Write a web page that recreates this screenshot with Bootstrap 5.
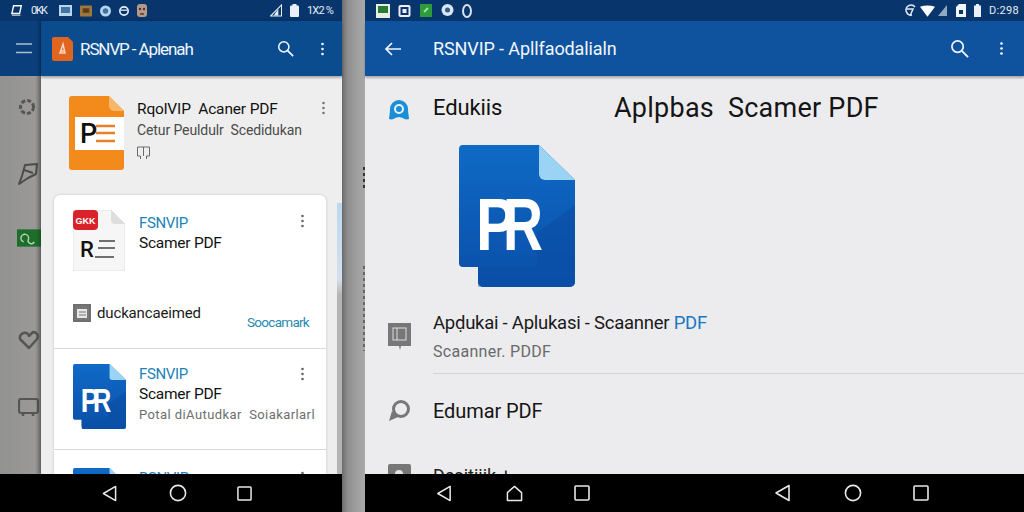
<!DOCTYPE html>
<html lang="id">
<head>
<meta charset="utf-8">
<title>RSNVIP</title>
<link href="https://cdn.jsdelivr.net/npm/bootstrap@5.3.0/dist/css/bootstrap.min.css" rel="stylesheet">
<style>
html,body{width:1024px;height:512px;overflow:hidden;margin:0}
body{font-family:Roboto,"Liberation Sans",sans-serif;color:#111;background:#a2a2a2}
svg{display:block;flex:none}
.phone-a{width:342px;height:512px}
.gap-strip{width:23px;height:512px;background:linear-gradient(90deg,#6c6c6c 0,#8f8f8f 25%,#a0a0a0 70%,#a8a8a8 100%)}
.gap-dots{width:2px;margin-left:21px;background-image:repeating-linear-gradient(180deg,#333 0 3px,transparent 3px 6px)}
.gap-dots-a{height:24px;margin-top:167px}
.gap-dots-b{height:85px;margin-top:75px;opacity:.55}
.phone-b{width:659px;height:512px}
.stat{height:21px;background:#07356c;color:#e6edf5;font-size:11px;flex:none}
.stat-a{padding:0 9px 0 11px}
.stat-b{padding:0 5px 0 11px}
.stat-txt{font-size:11px;line-height:21px}
.stat-a .stat-txt{letter-spacing:-.8px}
.stat-a .stat-k{letter-spacing:-1.5px}
.stat-b .stat-txt{letter-spacing:.3px}
.tight{margin-left:2px}
.body-a{height:453px}
.rail{width:41px}
.rail-top{height:55px;background:#0a3f7c;padding-left:16px}
.rail-low{height:398px;background:linear-gradient(90deg,#929290,#9a9997 85%,#7e7e7e);padding:22px 0 0 18px}
.rail-low svg:nth-child(1){margin-bottom:46px}
.rail-low svg:nth-child(2){margin:0 0 43px -1px}
.rail-low svg:nth-child(3){margin:0 0 83px -1px}
.rail-low svg:nth-child(4){margin-bottom:48px}
.drawer{width:301px;box-shadow:-2px 0 3px rgba(0,0,0,.25);z-index:1}
.bar{height:55px;background:#0c4f96;color:#f2f6fb;box-shadow:0 2px 2px rgba(0,0,0,.28);z-index:1;flex:none}
.bar-a{padding:0 17px 0 11px;background:#0b4c8f}
.bar-b{padding:0 20px 0 19px;background:#0f539f}
.bar-title{line-height:22px}
.bar-a .bar-title{margin-left:7px;font-size:17px;letter-spacing:-1.1px}
.bar-b .bar-title{margin-left:32px;font-size:18px;letter-spacing:-.1px}
.bar-search{margin:0 26px 0 auto}
.bar-b .bar-search{margin-right:30px}
.draw-body{background:#eeeeee;height:398px}
.top-item{height:119px;padding:20px 16px 0 28px}
.top-text{margin-left:13px;padding-top:3px}
.t-title{font-size:15.5px;line-height:20px;letter-spacing:-.15px;color:#111;white-space:pre}
.t-sub{font-size:14px;line-height:22px;letter-spacing:-.1px;color:#4b4b4b;white-space:pre}
.t-ic{margin-top:5px}
.top-kebab{margin:4px 0 0 auto}
.sheet-row{height:279px}
.sheet{width:272px;margin-left:13px;background:#fff;border-radius:6px 6px 0 0;box-shadow:0 0 3px rgba(0,0,0,.18);overflow:hidden}
.side-strip{width:5px;margin:8px 0 0 11px;background:linear-gradient(180deg,#bcd7ef,#d4e0ec 28%,#b5b5b5 34%,#b5b5b5)}
.cell{border-bottom:1px solid #dadada;padding-left:19px;padding-right:17px}
.cell-a{height:154px;padding-top:15px}
.cell-b{height:101px;padding-top:14px}
.cell-c{padding-top:17px;height:40px}
.c-text{margin-left:14px;padding-top:3px}
.c-text-b{margin-left:13px;padding-top:1px;width:140px}
.c-blue{font-size:15px;line-height:20px;letter-spacing:-.35px;color:#1b83b8}
.c-black{font-size:15.5px;line-height:21px;letter-spacing:-.25px;color:#111}
.c-grey{font-size:13px;line-height:20px;letter-spacing:.42px;color:#6e6e6e;white-space:pre}
.c-kebab{margin:4px 4px 0 auto}
.c-foot{margin-top:33px}
.c-foot-txt{font-size:15px;letter-spacing:-.15px;line-height:19px;margin:0 0 0 6px;color:#1a1a1a}
.c-link{font-size:13.5px;letter-spacing:-.72px;line-height:18px;color:#2a8ab0;margin:9px 0 0 auto}
.nav-a,.nav-b{height:38px;background:#000;flex:none}
.nav-a svg:nth-child(1){margin-left:102px}
.nav-a svg:nth-child(2){margin-left:52px}
.nav-a svg:nth-child(3){margin-left:50px}
.nav-b svg:nth-child(1){margin-left:71px}
.nav-b svg:nth-child(2){margin-left:54px}
.nav-b svg:nth-child(3){margin-left:51px}
.nav-b svg:nth-child(4){margin-left:184px}
.nav-b svg:nth-child(5){margin-left:53px}
.nav-b svg:nth-child(6){margin-left:51px}
.view{background:#ececee;height:398px;overflow:hidden}
.v-head{padding:19px 0 0 23px;height:69px}
.v-edu{font-size:22px;letter-spacing:-.1px;line-height:26px;margin-left:23px;width:181px}
.v-big{font-size:27px;letter-spacing:.25px;line-height:26px;white-space:pre;color:#151515}
.v-pic{margin-left:94px}
.v-row{padding-left:23px;margin-top:32px}
.v-stack{margin-left:22px;flex:1}
.v-l1{font-size:18.5px;letter-spacing:-.25px;line-height:26px;color:#1a1a1a;margin-top:-9px}
.v-l1 span{color:#1a78c2}
.v-l2{font-size:16px;letter-spacing:.3px;line-height:24px;color:#6a6a6a;margin-top:4px}
.v-rule{height:1px;background:#d4d4d6;margin-top:9px}
.v-row2{padding-left:23px;margin-top:24px}
.v-l3{font-size:20px;letter-spacing:-.1px;line-height:26px;margin-left:22px;color:#151515}
.v-row3{padding-left:23px;margin-top:40px}
.v-l4{font-size:18px;line-height:24px;margin-left:22px;color:#222}
</style>
</head>
<body class="d-flex">
<svg width="0" height="0" class="position-absolute">
<defs>
<linearGradient id="docg" x1="0" y1="0" x2="0" y2="1"><stop offset="0" stop-color="#0f6ac6"/><stop offset="1" stop-color="#0a4fa8"/></linearGradient>
<symbol id="kebab" viewBox="0 0 6 16"><circle cx="3" cy="2" r="1.6"/><circle cx="3" cy="8" r="1.6"/><circle cx="3" cy="14" r="1.6"/></symbol>
<symbol id="search" viewBox="0 0 20 20"><circle cx="8" cy="8" r="6" fill="none" stroke="currentColor" stroke-width="1.8"/><path d="M12.5 12.5 19 19" stroke="currentColor" stroke-width="2" fill="none"/></symbol>
<symbol id="tri" viewBox="0 0 16 18"><path d="M14.5 1.5v15L1.5 9z" fill="none" stroke="#e8e8e8" stroke-width="1.6" stroke-linejoin="round"/></symbol>
<symbol id="circ" viewBox="0 0 18 18"><circle cx="9" cy="9" r="7.6" fill="none" stroke="#e8e8e8" stroke-width="1.6"/></symbol>
<symbol id="sq" viewBox="0 0 16 16"><rect x="1" y="1" width="14" height="14" rx="1" fill="none" stroke="#e8e8e8" stroke-width="1.6"/></symbol>
<symbol id="house" viewBox="0 0 18 18"><path d="M1.5 16.5V8L9 1.5 16.5 8v8.5z" fill="none" stroke="#e8e8e8" stroke-width="1.6" stroke-linejoin="round"/></symbol>
<symbol id="bluedoc" viewBox="0 0 116 142">
<path d="M19 122h4v15a5 5 0 0 0 1 5h-5z" fill="#a9b6c6"/>
<path d="M4 0h76l36 35v102a5 5 0 0 1-5 5H24a5 5 0 0 1-5-5v-15H4a4 4 0 0 1-4-4V4a4 4 0 0 1 4-4z" fill="url(#docg)"/>
<path d="M19 122h59V88l38-28v77a5 5 0 0 1-5 5H24a5 5 0 0 1-5-5z" fill="#0a4ea6" opacity=".65"/>
<path d="M80 0l36 35H86a6 6 0 0 1-6-6z" fill="#9bd3f5"/>
<text x="17" y="105" font-family="Liberation Sans,sans-serif" font-size="74" font-weight="700" fill="#fff" textLength="40" lengthAdjust="spacingAndGlyphs">P</text>
<text x="44" y="105" font-family="Liberation Sans,sans-serif" font-size="74" font-weight="700" fill="#fff" textLength="40" lengthAdjust="spacingAndGlyphs">R</text>
</symbol>
</defs>
</svg>

<div class="phone-a d-flex flex-column">
  <div class="stat stat-a d-flex align-items-center">
    <svg width="12" height="13" viewBox="0 0 14 13"><path d="M3 1h9L10 10H1z" fill="none" stroke="#fff" stroke-width="1.6"/><path d="M1 12h10" stroke="#fff"/></svg>
    <span class="stat-txt stat-k ms-2 me-2">0KK</span>
    <svg class="ms-1" width="13" height="11" viewBox="0 0 13 11"><rect width="13" height="11" fill="#b8d6ee"/><rect x="2" y="2" width="9" height="6" fill="#3f74a5"/></svg>
    <svg class="ms-2" width="12" height="12" viewBox="0 0 13 12"><rect width="13" height="12" rx="1" fill="#a0773a"/><rect x="3" y="3" width="7" height="5" fill="#5a3d1a"/></svg>
    <svg class="ms-2" width="11" height="12" viewBox="0 0 12 12"><circle cx="6" cy="6" r="6" fill="#b6d4ee"/><circle cx="6" cy="6" r="3" fill="#3c72a8"/></svg>
    <svg class="ms-2" width="10" height="12" viewBox="0 0 12 12"><circle cx="6" cy="6" r="5" fill="none" stroke="#e8f0f8" stroke-width="2"/><path d="M2 5h8" stroke="#e8f0f8" stroke-width="1.5"/></svg>
    <svg class="ms-2" width="10" height="13" viewBox="0 0 10 13"><rect width="10" height="13" rx="3" fill="#b49a8a"/><circle cx="3" cy="5" r="1.2" fill="#532"/><circle cx="7" cy="5" r="1.2" fill="#532"/><rect x="3" y="9" width="4" height="2" fill="#7a4a3a"/></svg>
    <svg class="ms-auto" width="12" height="13" viewBox="0 0 13 13"><path d="M12.5.5v12H.5z" fill="none" stroke="#e8eef5" stroke-width="1.2"/><path d="M9 5v7H4z" fill="#e8eef5"/></svg>
    <svg class="ms-2" width="9" height="13" viewBox="0 0 9 13"><rect y="1.5" width="9" height="11.500" rx="1" fill="#e9f0f7"/><rect x="2.500" width="4" height="2" fill="#e9f0f7"/></svg>
    <span class="stat-txt ms-2">1X2 %</span>
  </div>
  <div class="body-a d-flex">
    <div class="rail">
      <div class="rail-top d-flex align-items-center"><svg width="16" height="11" viewBox="0 0 16 11"><path d="M0 1h16M0 9.500h16" stroke="#a9bed4" stroke-width="1.500"/></svg></div>
      <div class="rail-low">
        <svg width="18" height="18" viewBox="0 0 18 18"><circle cx="9" cy="9" r="6.500" fill="none" stroke="#555" stroke-width="3" stroke-dasharray="4 2"/></svg>
        <svg width="22" height="24" viewBox="0 0 22 24"><path d="M8 3 20 2l-1 10-8 4-9 6 3-8z M7 8l9 3" fill="none" stroke="#4b4b4b" stroke-width="2" stroke-linejoin="round"/></svg>
        <svg width="24" height="18" viewBox="0 0 25 18"><rect width="25" height="18" fill="#1e6d2a"/><path d="M7 13a4 4 0 1 1 5-3 3 3 0 0 0 6 3" fill="none" stroke="#b7d6ae" stroke-width="1.500"/></svg>
        <svg width="22" height="20" viewBox="0 0 22 20"><path d="M11 18 2 9a5 5 0 0 1 8-5l1 2 4-4c4 0 6 4 4 7z" fill="none" stroke="#555" stroke-width="2.500" stroke-linejoin="round"/></svg>
        <svg width="21" height="20" viewBox="0 0 21 20"><rect x="1" y="1" width="19" height="14" rx="2" fill="none" stroke="#555" stroke-width="2.200"/><path d="M5 15v3M15 15v3" stroke="#555" stroke-width="2.500"/></svg>
      </div>
    </div>
    <div class="drawer d-flex flex-column">
      <div class="bar bar-a d-flex align-items-center">
        <svg width="21" height="24" viewBox="0 0 21 24"><path d="M2 0h14l5 5v17a2 2 0 0 1-2 2H2a2 2 0 0 1-2-2V2a2 2 0 0 1 2-2z" fill="#e0651f"/><path d="M8 16 11 7l2 9zM8 14h5" fill="none" stroke="#f7d7bf" stroke-width="1.500"/></svg>
        <span class="bar-title">RSNVP - Aplenah</span>
        <svg class="bar-search" width="17" height="17"><use href="#search"/></svg>
        <svg width="5" height="16" fill="#f2f6fb"><use href="#kebab"/></svg>
      </div>
      <div class="draw-body overflow-hidden">
        <div class="top-item d-flex">
          <svg width="55" height="74" viewBox="0 0 55 74"><path d="M3 0h37l15 15v56a3 3 0 0 1-3 3H3a3 3 0 0 1-3-3V3a3 3 0 0 1 3-3z" fill="#f28a1c"/><path d="M40 0l15 15H45a5 5 0 0 1-5-5z" fill="#f7b76a"/><rect x="6" y="21" width="49" height="33" fill="#fff"/><text x="11" y="47" font-family="Roboto,sans-serif" font-size="27" font-weight="500" fill="#111">P</text><path d="M27 30h19M27 37h19M27 45h19" stroke="#e8802a" stroke-width="2.500"/></svg>
          <div class="top-text">
            <div class="t-title">RqolVIP  Acaner PDF</div>
            <div class="t-sub">Cetur Peuldulr  Scedidukan</div>
            <svg class="t-ic" width="13" height="13" viewBox="0 0 13 13"><path d="M.5 1h12v9h-3v3M.5 1v9h3v3M6.500 1v9" fill="none" stroke="#6a6a6a"/></svg>
          </div>
          <svg class="top-kebab" width="5" height="16" fill="#777"><use href="#kebab"/></svg>
        </div>
        <div class="sheet-row d-flex">
          <div class="sheet">
            <div class="cell cell-a">
              <div class="d-flex">
                <svg width="52" height="61" viewBox="0 0 52 61"><path d="M2 0h36l14 14v45a2 2 0 0 1-2 2H2a2 2 0 0 1-2-2V2a2 2 0 0 1 2-2z" fill="#f6f6f6" stroke="#e2e2e2"/><path d="M38 0l14 14H42a4 4 0 0 1-4-4z" fill="#dedede"/><rect y="0" width="25" height="20" rx="4" fill="#d9222a"/><text x="12.500" y="14" text-anchor="middle" font-family="Liberation Sans,sans-serif" font-size="9" font-weight="700" fill="#fff">GKK</text><text x="7" y="47" font-family="Roboto,sans-serif" font-size="22" font-weight="500" fill="#111">R</text><path d="M26 31h16M25 38h17M22 47h19" stroke="#444" stroke-width="1.500"/></svg>
                <div class="c-text">
                  <div class="c-blue">FSNVIP</div>
                  <div class="c-black">Scamer PDF</div>
                </div>
                <svg class="c-kebab" width="5" height="14" fill="#666"><use href="#kebab"/></svg>
              </div>
              <div class="d-flex c-foot">
                <svg width="18" height="19" viewBox="0 0 18 19"><path d="M1 1h16v16H1z" fill="#777" stroke="#6f6f6f" stroke-width="2"/><path d="M4 5h10v9H4z" fill="#e8e8e8"/><path d="M6 8h7M6 11h7" stroke="#777"/></svg>
                <span class="c-foot-txt">duckancaeimed</span>
                <span class="c-link">Soocamark</span>
              </div>
            </div>
            <div class="cell cell-b d-flex">
              <svg width="53" height="67" viewBox="0 0 116 142"><use href="#bluedoc"/></svg>
              <div class="c-text-b">
                <div class="c-blue">FSNVIP</div>
                <div class="c-black">Scamer PDF</div>
                <div class="c-grey">Potal diAutudkar  Soiakarlarl</div>
              </div>
              <svg class="c-kebab" width="5" height="14" fill="#666"><use href="#kebab"/></svg>
            </div>
            <div class="cell cell-c d-flex border-0">
              <svg width="53" height="67" viewBox="0 0 116 142"><use href="#bluedoc"/></svg>
              <div class="c-text-b"><div class="c-blue">RSNVIP</div></div>
              <svg class="c-kebab" width="5" height="14" fill="#666"><use href="#kebab"/></svg>
            </div>
          </div>
          <div class="side-strip"></div>
        </div>
      </div>
    </div>
  </div>
  <div class="nav-a d-flex align-items-center">
    <svg width="15" height="17"><use href="#tri"/></svg>
    <svg width="18" height="18"><use href="#circ"/></svg>
    <svg width="15" height="15"><use href="#sq"/></svg>
  </div>
</div>

<div class="gap-strip">
  <div class="gap-dots gap-dots-a"></div>
  <div class="gap-dots gap-dots-b"></div>
</div>

<div class="phone-b d-flex flex-column">
  <div class="stat stat-b d-flex align-items-center">
    <svg width="14" height="14" viewBox="0 0 14 14"><rect width="14" height="14" fill="#e6efe0"/><rect x="2" y="2" width="10" height="7" fill="#2c7a3a"/></svg>
    <svg class="ms-2" width="13" height="12" viewBox="0 0 12 12"><rect x="1" y="1" width="10" height="10" rx="1" fill="none" stroke="#eef" stroke-width="2"/><rect x="4" y="4" width="4" height="4" fill="#eef"/></svg>
    <svg class="ms-2" width="14" height="13" viewBox="0 0 12 13"><rect width="12" height="13" fill="#2d9a3c"/><path d="M4 8l4-4" stroke="#9fe0a0" stroke-width="2"/></svg>
    <svg class="ms-2" width="13" height="13" viewBox="0 0 13 13"><circle cx="6.500" cy="6" r="6" fill="#d9e6f2"/><circle cx="6.500" cy="6" r="2.500" fill="#2f5f8f"/></svg>
    <svg class="ms-2" width="10" height="14" viewBox="0 0 10 14"><ellipse cx="5" cy="7" rx="4" ry="6" fill="none" stroke="#d5e2ee" stroke-width="2"/></svg>
    <svg class="ms-auto" width="12" height="14" viewBox="0 0 12 14"><path d="M11 3a5 5 0 1 0-3 8M3 5h6L6 12" fill="none" stroke="#dfe9f3" stroke-width="1.500"/></svg>
    <svg class="ms-1" width="15" height="12" viewBox="0 0 16 12"><path d="M0 1.500Q8-1.500 16 1.500L8 12z" fill="#fff"/></svg>
    <svg class="tight" width="11" height="11" viewBox="0 0 9 11"><path d="M9 0v11H0z" fill="#8fa9c4"/></svg>
    <svg class="ms-2" width="10" height="13" viewBox="0 0 10 13"><path d="M0 3l3-3h7v13H0z" fill="#f2f6fa"/><path d="M3 6h4v4H3z" fill="#07356c"/></svg>
    <svg class="ms-2" width="7" height="13" viewBox="0 0 7 13"><rect y="1.500" width="7" height="11.500" fill="#e9f0f7"/><rect x="2" width="3" height="2" fill="#e9f0f7"/></svg>
    <span class="stat-txt ms-2">D:298</span>
  </div>
  <div class="bar bar-b d-flex align-items-center">
    <svg width="17" height="14" viewBox="0 0 17 14"><path d="M17 7H2M8 1 2 7l6 6" fill="none" stroke="#f2f6fb" stroke-width="1.700"/></svg>
    <span class="bar-title">RSNVIP - Apllfaodalialn</span>
    <svg class="bar-search" width="19" height="19"><use href="#search"/></svg>
    <svg width="5" height="17" fill="#f2f6fb"><use href="#kebab"/></svg>
  </div>
  <div class="view">
    <div class="v-head d-flex">
      <svg class="mt-1" width="22" height="22" viewBox="0 0 22 22"><path d="M11 1a9 9 0 0 1 9 9c0 4 1 8 1 10-3 1-5 0-6-1l-4-1-4 1c-1 1-3 2-6 1 0-2 1-6 1-10a9 9 0 0 1 9-9z" fill="#1a8fd6"/><circle cx="11" cy="10" r="4" fill="none" stroke="#e9f3fb" stroke-width="2"/></svg>
      <span class="v-edu">Edukiis</span>
      <span class="v-big">Aplpbas  Scamer PDF</span>
    </div>
    <svg class="v-pic" width="116" height="142"><use href="#bluedoc"/></svg>
    <div class="v-row d-flex">
      <svg class="mt-1" width="23" height="27" viewBox="0 0 23 27"><path d="M0 0h23v23H13l-1 4-1-4H0z" fill="#777"/><rect x="5" y="5" width="13" height="12" fill="none" stroke="#ddd"/><path d="M9 5v12" stroke="#ddd"/></svg>
      <div class="v-stack">
        <div class="v-l1">Apḍukai - Aplukasi - Scaanner <span>PDF</span></div>
        <div class="v-l2">Scaanner. PDDF</div>
        <div class="v-rule"></div>
      </div>
    </div>
    <div class="v-row2 d-flex align-items-center">
      <svg width="23" height="22" viewBox="0 0 23 22"><circle cx="13" cy="9" r="7.500" fill="none" stroke="#777" stroke-width="3"/><path d="M1 21l3-10 6 6z" fill="#777"/></svg>
      <span class="v-l3">Edumar PDF</span>
    </div>
    <div class="v-row3 d-flex">
      <svg width="23" height="22" viewBox="0 0 23 22"><rect width="23" height="22" rx="2" fill="#777"/><circle cx="11" cy="10" r="4" fill="#e4e4e4"/></svg>
      <span class="v-l4">Desitiiik +</span>
    </div>
  </div>
  <div class="nav-b d-flex align-items-center">
    <svg width="16" height="17"><use href="#tri"/></svg>
    <svg width="17" height="17"><use href="#house"/></svg>
    <svg width="16" height="16"><use href="#sq"/></svg>
    <svg width="17" height="18"><use href="#tri"/></svg>
    <svg width="18" height="18"><use href="#circ"/></svg>
    <svg width="16" height="16"><use href="#sq"/></svg>
  </div>
</div>
<script src="https://cdn.jsdelivr.net/npm/bootstrap@5.3.0/dist/js/bootstrap.bundle.min.js"></script>
</body>
</html>
